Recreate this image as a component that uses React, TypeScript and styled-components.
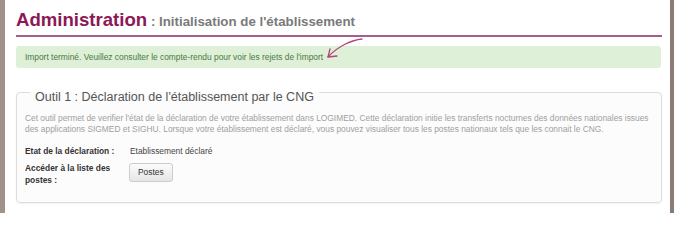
import React from "react";
import styled, { createGlobalStyle } from "styled-components";

const GlobalStyle = createGlobalStyle`
  html, body {
    margin: 0;
    padding: 0;
    background: #ffffff;
  }
  body {
    font-family: "Liberation Sans", Arial, sans-serif;
  }
`;

const Frame = styled.div`
  box-sizing: border-box;
  width: 674px;
  height: 213px;
  overflow: hidden;
  background: #ffffff;
  border-left: 5px solid #a0928b;
  border-right: 4px solid #8b7b74;
  padding: 9px 8px 0 11px;
`;

const Header = styled.h1`
  margin: 0;
  padding-bottom: 2px;
  border-bottom: 2px solid #a3618a;
  font-size: 13.3px;
  line-height: 22px;
  font-weight: bold;
  white-space: nowrap;
`;

const Title = styled.span`
  font-size: 18.6px;
  color: #8c1855;
`;

const Subtitle = styled.span`
  font-size: 13.3px;
  color: #7a7a7a;
`;

const Alert = styled.div`
  position: relative;
  margin: 9px 1px 0 0;
  height: 22px;
  display: flex;
  align-items: center;
  padding: 0 9px;
  background: #dff0d8;
  border-radius: 3px;
  font-size: 8.4px;
  color: #4a7a44;
`;

const Arrow = styled.svg`
  position: absolute;
  left: 310px;
  top: -9px;
  width: 56px;
  height: 24px;
  overflow: visible;
`;

const Tool = styled.fieldset`
  margin: 13.5px 0 0 0;
  padding: 8.5px 8px 15.5px 8px;
  border: 1px solid #dddddd;
  border-radius: 4px;
  background: #fcfcfc;
  box-shadow: 0 1px 2px rgba(0, 0, 0, 0.06);
  min-width: 0;
`;

const Legend = styled.legend`
  margin-left: 5px;
  padding: 8.6px 5px 0 5px;
  font-size: 12.5px;
  line-height: 14px;
  color: #555555;
`;

const Description = styled.p`
  margin: 0;
  font-size: 8.4px;
  line-height: 11.5px;
  color: #a0a0a0;
`;

const Rows = styled.div`
  display: grid;
  grid-template-columns: 105px 1fr;
  row-gap: 5.6px;
  margin-top: 10px;
  align-items: start;
`;

const Label = styled.div`
  font-size: 8.4px;
  line-height: 11.7px;
  font-weight: bold;
  color: #333333;
  padding-right: 8px;
`;

const Value = styled.div`
  font-size: 8.4px;
  line-height: 11.7px;
  color: #444444;
`;

const Button = styled.button`
  box-sizing: border-box;
  height: 19px;
  padding: 0 8px;
  margin-left: -1px;
  font-family: "Liberation Sans", Arial, sans-serif;
  font-size: 8.4px;
  color: #333333;
  border: 1px solid #cccccc;
  border-radius: 3px;
  background: linear-gradient(#fbfbfb, #e6e6e6);
  cursor: pointer;
`;

export default function App() {
  return (
    <>
      <GlobalStyle />
      <Frame>
        <Header>
          <Title>Administration</Title>
          <Subtitle> : Initialisation de l'établissement</Subtitle>
        </Header>

        <Alert>
          Import terminé. Veuillez consulter le compte-rendu pour voir les rejets de l'import
          <Arrow viewBox="0 0 56 24">
            <path
              d="M36 2 C 26 3, 12 9, 2 20"
              fill="none"
              stroke="#b4457c"
              strokeWidth="1.3"
              strokeLinecap="round"
            />
            <path
              d="M4 12 L2 20 L11 19"
              fill="none"
              stroke="#b4457c"
              strokeWidth="1.3"
              strokeLinecap="round"
              strokeLinejoin="round"
            />
          </Arrow>
        </Alert>

        <Tool>
          <Legend>Outil 1 : Déclaration de l'établissement par le CNG</Legend>
          <Description>
            Cet outil permet de verifier l'état de la déclaration de votre établissement dans
            LOGIMED. Cette déclaration initie les transferts nocturnes des données nationales
            issues des applications SIGMED et SIGHU. Lorsque votre établissement est déclaré,
            vous pouvez visualiser tous les postes nationaux tels que les connait le CNG.
          </Description>
          <Rows>
            <Label>Etat de la déclaration :</Label>
            <Value>Etablissement déclaré</Value>
            <Label>Accéder à la liste des postes :</Label>
            <Value>
              <Button>Postes</Button>
            </Value>
          </Rows>
        </Tool>
      </Frame>
    </>
  );
}
